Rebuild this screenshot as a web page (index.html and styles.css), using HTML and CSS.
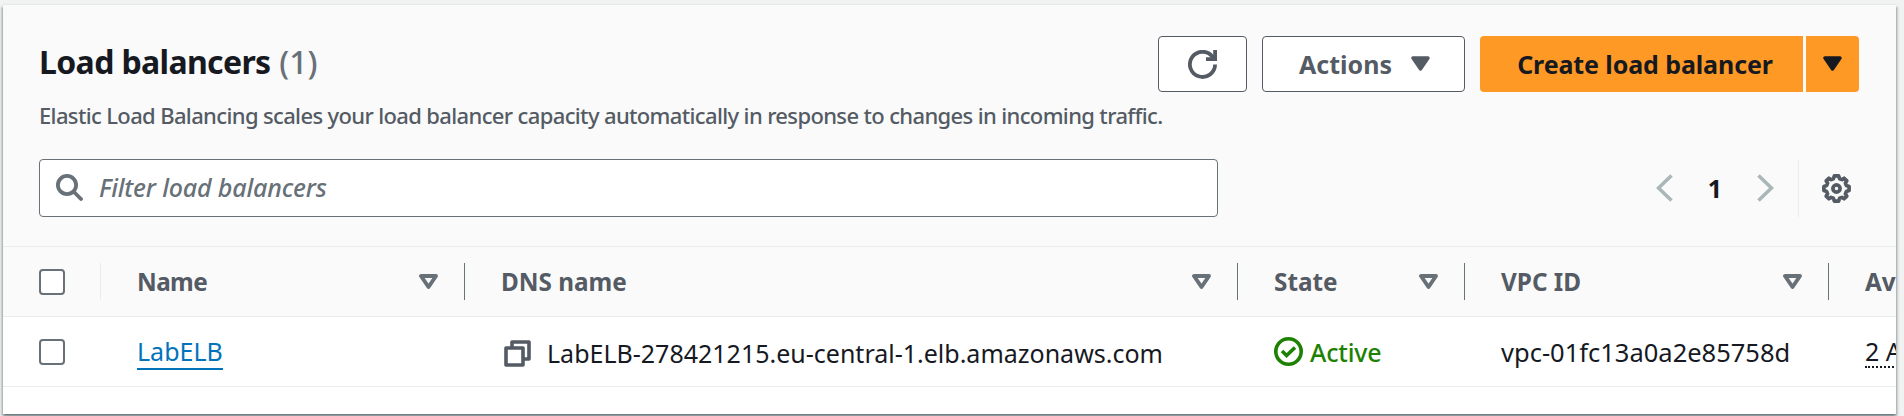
FILE: index.html
```html
<!DOCTYPE html>
<html lang="en">
<head>
<meta charset="utf-8">
<title>Load balancers</title>
<link rel="stylesheet" href="styles.css">
</head>
<body>
<svg class="defs" width="0" height="0" aria-hidden="true">
  <symbol id="caret" viewBox="0 0 19 15"><path d="M2 2h15L9.500 13z" fill="currentColor" stroke="currentColor" stroke-width="3.400" stroke-linejoin="round"/></symbol>
  <symbol id="sort" viewBox="0 0 19 15"><path d="M2 2h15L9.500 13z" fill="none" stroke="currentColor" stroke-width="3.900" stroke-linejoin="round"/></symbol>
</svg>
<main class="panel">
  <header class="head">
    <div class="top">
      <div class="intro">
        <h1 class="title">Load balancers <span class="count">(1)</span></h1>
        <p class="desc">Elastic Load Balancing scales your load balancer capacity automatically in response to changes in incoming traffic.</p>
      </div>
      <div class="actions">
        <button class="btn refresh" aria-label="Refresh">
          <svg width="29" height="29" viewBox="0 0 29 29" fill="none" stroke="currentColor" stroke-width="3.800"><path d="M27.100 14.500A12.600 12.600 0 1 1 24.600 6.800L26 9"/><path d="M27.100 0v9.100H18"/></svg>
        </button>
        <button class="btn menu">Actions<svg class="caret" width="19" height="15"><use href="#caret"/></svg></button>
        <div class="split">
          <button class="primary create">Create load balancer</button>
          <button class="primary more" aria-label="More"><svg class="caret" width="19" height="15"><use href="#caret"/></svg></button>
        </div>
      </div>
    </div>
    <div class="tools">
      <div class="filter">
        <svg width="27" height="27" viewBox="0 0 27 27" fill="none" stroke="currentColor" stroke-width="3.800" stroke-linecap="round"><circle cx="11" cy="11" r="9.100"/><path d="M18 18l7 7"/></svg>
        <span class="placeholder">Filter load balancers</span>
      </div>
      <div class="pager">
        <svg class="chev" width="17" height="28" viewBox="0 0 17 28"><path d="M15.500 1.500L2.500 14l13 12.500"/></svg>
        <span class="page">1</span>
        <svg class="chev" width="17" height="28" viewBox="0 0 17 28"><path d="M1.500 1.500l13 12.500-13 12.500"/></svg>
        <span class="rule"></span>
        <svg class="gear" width="29" height="29" viewBox="0 0 29 29" fill="none" stroke="currentColor" stroke-width="3.700" stroke-linejoin="round"><path d="M12.400 1.900H16.600L17.600 4.700L19.900 5.600L22.100 4.200L24.800 6.900L23.400 9.100L24.300 11.400L27.100 12.400V16.600L24.300 17.600L23.400 19.900L24.800 22.100L22.100 24.800L19.900 23.400L17.600 24.300L16.600 27.100H12.400L11.400 24.300L9.100 23.400L6.900 24.800L4.200 22.100L5.600 19.900L4.700 17.600L1.900 16.600V12.400L4.700 11.400L5.600 9.100L4.200 6.900L6.900 4.200L9.100 5.600L11.400 4.700Z"/><circle cx="14.500" cy="14.500" r="3.600"/></svg>
      </div>
    </div>
  </header>
  <section class="grid columns">
    <div class="cell check"><span class="box"></span><span class="divider light"></span></div>
    <div class="cell"><span class="label name">Name</span><svg class="sort" width="19" height="15"><use href="#sort"/></svg><span class="divider"></span></div>
    <div class="cell"><span class="label">DNS name</span><svg class="sort" width="19" height="15"><use href="#sort"/></svg><span class="divider"></span></div>
    <div class="cell"><span class="label">State</span><svg class="sort" width="19" height="15"><use href="#sort"/></svg><span class="divider"></span></div>
    <div class="cell"><span class="label">VPC ID</span><svg class="sort" width="19" height="15"><use href="#sort"/></svg><span class="divider"></span></div>
    <div class="cell"><span class="label">Availability Zones</span></div>
  </section>
  <section class="grid row">
    <div class="cell check"><span class="box"></span></div>
    <div class="cell"><a class="link">LabELB</a></div>
    <div class="cell dns">
      <svg width="27" height="27" viewBox="0 0 27 27" fill="none" stroke="currentColor" stroke-width="3.600" stroke-linejoin="round"><path d="M2 8h17v17H2z"/><path d="M8 7.500V2h17v17h-5.500"/></svg>
      <span>LabELB-278421215.eu-central-1.elb.amazonaws.com</span>
    </div>
    <div class="cell state">
      <svg width="29" height="29" viewBox="0 0 29 29" fill="none" stroke="currentColor" stroke-width="3.600"><circle cx="14.500" cy="14.500" r="12.700"/><path d="M8 14l4.600 4.600L21 10.500"/></svg>
      <span>Active</span>
    </div>
    <div class="cell vpc">vpc-01fc13a0a2e85758d</div>
    <div class="cell"><span class="zones">2 Availability Zones</span></div>
  </section>
</main>
</body>
</html>
```
FILE: styles.css
```css
* { box-sizing: border-box; }
body {
  margin: 0;
  height: 416px;
  overflow: hidden;
  padding: 5px 8px 2px 3px;
  background: #f1f3f3;
  font-family: "Noto Sans", "Open Sans", sans-serif;
  font-size: 25px;
  color: #16191f;
}
.defs { position: absolute; }
svg { flex: none; display: block; }
.panel {
  height: 409px;
  background: #fff;
  box-shadow: 0 2px 2px rgba(0, 28, 36, .35), 2px 2px 2px rgba(0, 28, 36, .18), -2px 2px 2px rgba(0, 28, 36, .18), 0 -1px 1px #e4e8e8;
}
.head {
  height: 242px;
  padding: 31px 37px 0 36px;
  background: #fafafa;
  border-bottom: 1px solid #eaeded;
}
.top { display: flex; justify-content: space-between; height: 123px; }
.intro { min-width: 0; }
.title {
  margin: 0;
  font-size: 32px;
  line-height: 52px;
  font-weight: 700;
  letter-spacing: -.64px;
  white-space: nowrap;
}
.count { font-weight: 500; color: #687078; letter-spacing: 0; margin-left: 1px; }
.desc {
  margin: 11px 0 0;
  font-size: 22px;
  line-height: 32px;
  font-weight: 500;
  letter-spacing: -.64px;
  color: #545b64;
  white-space: nowrap;
}
.actions { display: flex; gap: 15px; height: 56px; flex: none; }
button { font: inherit; font-weight: 700; padding: 0; margin: 0; display: flex; align-items: center; white-space: nowrap; }
.btn { background: #fff; border: 1px solid #545b64; border-radius: 4px; color: #545b64; }
.refresh { width: 89px; justify-content: center; }
.menu { width: 203px; padding: 0 34px 0 36px; justify-content: space-between; }
.caret { margin-bottom: 1px; }
.split { display: flex; gap: 3px; }
.primary { background: #ff9926; border: 0; color: #16191f; justify-content: center; }
.create { width: 323px; border-radius: 4px 0 0 4px; padding-left: 7px; letter-spacing: -.1px; }
.more { width: 53px; border-radius: 0 4px 4px 0; }
.tools { display: flex; justify-content: space-between; height: 58px; }
.filter {
  width: 1179px;
  display: flex;
  align-items: center;
  gap: 16px;
  padding: 0 15px 1px 16px;
  background: #fff;
  border: 1px solid #687078;
  border-radius: 4px;
  color: #687078;
}
.placeholder { font-style: italic; font-weight: 500; line-height: 34px; letter-spacing: -.16px; padding-bottom: 1px; }
.pager { display: flex; align-items: center; padding-right: 8px; color: #545b64; }
.chev { fill: none; stroke: #aab7b8; stroke-width: 3.600px; }
.page { width: 84px; text-align: center; font-weight: 700; color: #16191f; }
.rule { width: 1px; height: 57px; margin: 0 23px 0 24px; background: #eaeded; }
.grid { display: grid; grid-template-columns: 98px 364px 773px 227px 364px 67px; height: 70px; border-bottom: 1px solid #eaeded; }
.columns { background: #fafafa; color: #545b64; font-weight: 700; font-size: 24.300px; }
.cell { display: flex; align-items: center; min-width: 0; overflow: hidden; padding-left: 36px; white-space: nowrap; }
.check { padding-left: 36px; }
.box { width: 26px; height: 26px; border: 2px solid #687078; border-radius: 4px; background: #fff; }
.divider { width: 1px; height: 37px; margin-left: 26px; background: #687078; }
.light { margin-left: auto; background: #eaeded; }
.name { letter-spacing: -.6px; }
.sort { margin-left: auto; color: #687078; }
.link { color: #0073bb; line-height: 33px; border-bottom: 2px solid #0073bb; margin-top: 1px; }
.dns { padding-left: 39px; gap: 16px; }
.dns svg { color: #545b64; margin-top: 3px; }
.dns span { padding-top: 3px; }
.state { color: #1d8102; gap: 7px; font-weight: 500; letter-spacing: -.2px; }
.vpc { font-size: 25.500px; }
.zones { line-height: 30px; border-bottom: 2px dotted #16191f; margin-top: 1px; }
```
